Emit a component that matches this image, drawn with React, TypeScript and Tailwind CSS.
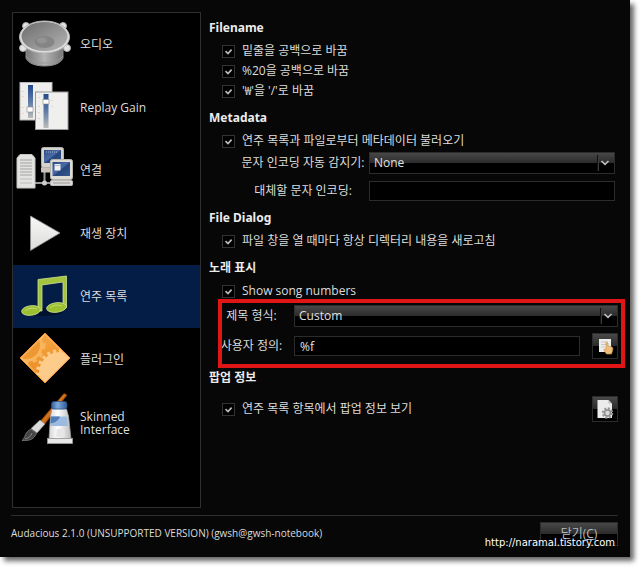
import { useState, type ComponentProps, type ReactNode } from 'react';
import { clsx } from 'clsx';

function AudioIcon() {
  return (
    <>
      <defs>
        <linearGradient id="spk-base" x1="0" x2="1">
          <stop offset="0" stopColor="#777" />
          <stop offset="0.5" stopColor="#b4b4b4" />
          <stop offset="1" stopColor="#777" />
        </linearGradient>
        <linearGradient id="spk-cone" x1="0" x2="1" y1="0" y2="1">
          <stop offset="0" stopColor="#6c6c6c" />
          <stop offset="1" stopColor="#b5b5b5" />
        </linearGradient>
      </defs>
      <path
        d="M13 34v11c2 5 9 8 18.500 8S48 50 50 45V34Z"
        fill="url(#spk-base)"
        stroke="#8d8d8d"
      />
      <path d="M13 43c4 5 10 7 18.500 7S46 48 50 43" fill="none" stroke="#999" />
      <g fill="#e3e3e3" stroke="#aaa">
        <circle cx="13" cy="13" r="3.500" />
        <circle cx="50" cy="13" r="3.500" />
        <circle cx="10" cy="35" r="3.500" />
        <circle cx="54" cy="35" r="3.500" />
      </g>
      <ellipse cx="31.500" cy="24" rx="25" ry="16" fill="#dedede" stroke="#b5b5b5" />
      <ellipse cx="31.500" cy="23.500" rx="23" ry="14.500" fill="url(#spk-cone)" />
      <ellipse cx="31.500" cy="29" rx="10" ry="6" fill="#858585" />
      <ellipse cx="29" cy="27.500" rx="5" ry="3" fill="#949494" />
    </>
  );
}

function GainIcon() {
  return (
    <>
      <defs>
        <linearGradient id="gain" x1="0" x2="0" y1="0" y2="1">
          <stop offset="0" stopColor="#24498a" />
          <stop offset="0.5" stopColor="#5c7ba8" />
          <stop offset="1" stopColor="#bdbdb8" />
        </linearGradient>
      </defs>
      <rect x="7" y="6.500" width="32" height="37.500" fill="#eeeeec" stroke="#b9b9b9" />
      <rect x="15" y="9" width="5" height="33" fill="url(#gain)" />
      <rect x="14" y="31" width="6" height="5" fill="#fff" stroke="#888" strokeWidth="0.600" />
      <path d="M10 15v1M10 20v1M10 31v1M24 15v1M10 37v1" stroke="#e8b9a8" />
      <rect x="22.500" y="16" width="32.500" height="37.500" fill="#efefed" stroke="#999" />
      <rect x="30.500" y="18" width="5" height="34" fill="url(#gain)" />
      <rect x="30" y="23.500" width="6" height="4.500" fill="#fff" stroke="#888" strokeWidth="0.600" />
      <path d="M26 21v1M26 30v1M26 36v1M26 42v1M39 24v1M39 30v1" stroke="#e8b9a8" />
    </>
  );
}

function NetworkIcon() {
  return (
    <>
      <defs>
        <linearGradient id="screen" x1="0" x2="1" y1="0" y2="1">
          <stop offset="0" stopColor="#2b4a83" />
          <stop offset="0.450" stopColor="#4a6ca6" />
          <stop offset="0.550" stopColor="#26457d" />
          <stop offset="1" stopColor="#34568f" />
        </linearGradient>
      </defs>
      <path d="M22 44h15M31.500 33v11" stroke="#999" strokeWidth="2" />
      <circle cx="31.500" cy="44" r="2.500" fill="#ccc" />
      <path d="M4 19l3-3.500h12l3 3.500v30H4Z" fill="#e2e2e0" stroke="#c4c4c4" />
      <path d="M7 21h12M7 24h12M7 27h12M7 30h12M7 33h12M7 36h12" stroke="#a2a2a0" />
      <path d="M7 40h12M7 44h12" stroke="#bcbcba" />
      <rect x="28" y="28" width="18" height="5.500" rx="1" fill="#c9c5bd" />
      <rect x="28.500" y="8.500" width="22" height="20" rx="2" fill="#d6d3cc" stroke="#b5b3ad" />
      <rect x="31" y="11" width="17" height="13" fill="url(#screen)" />
      <path d="M33 13h12" stroke="#a3b5d4" strokeDasharray="1 1" />
      <rect x="37.500" y="41.500" width="22" height="5" rx="1" fill="#dcdad5" stroke="#bbb" />
      <path d="M40 44h17" stroke="#999" />
      <rect x="37.500" y="20.500" width="22" height="20" rx="2" fill="#dedbd5" stroke="#b5b3ad" />
      <rect x="39.500" y="23" width="17.500" height="14" fill="url(#screen)" />
      <rect x="41.500" y="25" width="6" height="6.500" fill="#f0f0f0" />
      <path d="M42 26.500h5" stroke="#aab8d0" />
    </>
  );
}

function PlayIcon() {
  return (
    <>
      <defs>
        <linearGradient id="play" x1="0" x2="0" y1="0" y2="1">
          <stop offset="0" stopColor="#f8f8f8" />
          <stop offset="1" stopColor="#dcdcda" />
        </linearGradient>
      </defs>
      <path d="M17.500 14v34.500L47 31Z" fill="url(#play)" stroke="#8f8f8f" strokeWidth="0.800" />
    </>
  );
}

function MusicIcon() {
  return (
    <>
      <ellipse cx="28" cy="47" rx="22" ry="4" fill="#02122e" />
      <path
        d="M25 14.500L53.500 11v31.500H50V17L29 20v26h-4Z"
        fill="#a3c43c"
        stroke="#cfe090"
        strokeWidth="0.800"
      />
      <ellipse cx="18" cy="45.500" rx="9.500" ry="4.800" fill="#9dbf32" stroke="#cfe090" strokeWidth="0.800" transform="rotate(-7 18 45.500)" />
      <ellipse cx="43.500" cy="42.500" rx="10" ry="4.800" fill="#9dbf32" stroke="#cfe090" strokeWidth="0.800" transform="rotate(-7 43.500 42.500)" />
      <path d="M12 46c3-3 8-3.500 12-2M37 43c3-3 8-3.500 12-2" fill="none" stroke="#c4de70" />
    </>
  );
}

function PluginIcon() {
  return (
    <>
      <defs>
        <clipPath id="diamond">
          <path d="M32 5.500L56.500 30L32 54.500L7.500 30Z" />
        </clipPath>
        <linearGradient id="plug" x1="0" x2="0" y1="0" y2="1">
          <stop offset="0" stopColor="#f6a542" />
          <stop offset="1" stopColor="#e88a20" />
        </linearGradient>
      </defs>
      <path d="M32 5L57 30L32 55L7 30Z" fill="url(#plug)" stroke="#f08c28" />
      <g clipPath="url(#diamond)">
        <circle cx="13" cy="17" r="17" fill="#f9b55c" />
        <circle cx="13" cy="17" r="17" fill="none" stroke="#f9b55c" strokeWidth="5" strokeDasharray="4 4" />
        <circle cx="13" cy="17" r="14" fill="#ee9833" />
        <circle cx="47" cy="45" r="21" fill="#fdcb8a" />
        <circle cx="47" cy="45" r="22" fill="none" stroke="#fdcb8a" strokeWidth="4" strokeDasharray="3 3" />
      </g>
      <path d="M32 6.500L55.500 30L32 53.500L8.500 30Z" fill="none" stroke="#ffc47a" strokeWidth="0.800" />
    </>
  );
}

function SkinIcon() {
  return (
    <>
      <defs>
        <linearGradient id="tube" x1="0" x2="1">
          <stop offset="0" stopColor="#d5d5d5" />
          <stop offset="0.400" stopColor="#fff" />
          <stop offset="1" stopColor="#bcbcbc" />
        </linearGradient>
        <linearGradient id="cap" x1="0" x2="1">
          <stop offset="0" stopColor="#31619f" />
          <stop offset="0.400" stopColor="#7ea9dc" />
          <stop offset="1" stopColor="#2e5a96" />
        </linearGradient>
      </defs>
      <path d="M51 2.500l3 1.500L31 34l-4-3.500Z" fill="#c8660f" stroke="#8d4408" strokeWidth="0.600" />
      <path d="M51.500 4L29.500 31" stroke="#d88838" />
      <path d="M27 29l5 4-8 9-6-4.500Z" fill="#dcdcdc" stroke="#888" strokeWidth="0.600" />
      <path d="M18 38l5.500 4.500C21 48 17 50 9 49.500c3-2 3-9 9-11.500Z" fill="#444" stroke="#888" strokeWidth="0.700" />
      <path d="M12 48c4-1 6-3 7-6" fill="none" stroke="#888" />
      <path d="M39 18h14.500l2 7 2.500 22.500H36L37.500 25Z" fill="url(#tube)" stroke="#9d9d9d" strokeWidth="0.700" />
      <path d="M38 25.500h16l1 9.500H37.500Z" fill="#9dbbe0" />
      <path d="M38 25.500h9c-1 3-4 6-9.500 7Z" fill="#507fba" />
      <rect x="38.500" y="10.500" width="15.500" height="7.500" rx="2.500" fill="url(#cap)" stroke="#2b5288" strokeWidth="0.700" />
      <path d="M43 46l1-8h7l1 8" fill="#e6e6e6" />
      <rect x="34.500" y="47.500" width="25" height="5" fill="#e8e8e8" stroke="#9b9b9b" strokeWidth="0.800" />
    </>
  );
}

const categories: { label: string; icon: ReactNode }[] = [
  { label: '오디오', icon: <AudioIcon /> },
  { label: 'Replay Gain', icon: <GainIcon /> },
  { label: '연결', icon: <NetworkIcon /> },
  { label: '재생 장치', icon: <PlayIcon /> },
  { label: '연주 목록', icon: <MusicIcon /> },
  { label: '플러그인', icon: <PluginIcon /> },
  { label: 'Skinned Interface', icon: <SkinIcon /> },
];

const glossy =
  'border border-[#2c2c2c] bg-[linear-gradient(#484848,#2b2b2b_50%,#000_50%,#000)]';

function Section({ title, children }: { title: string; children: ReactNode }) {
  return (
    <section className="flex flex-col gap-[3px]">
      <h2 className="h-5 font-['Noto_Sans','Noto_Sans_CJK_KR',sans-serif] text-xs leading-5 font-bold text-[#ececec]">
        {title}
      </h2>
      <div>{children}</div>
    </section>
  );
}

function Check({ label }: { label: string }) {
  return (
    <label className="ml-[13px] flex h-5 items-center gap-[7px]">
      <span className="relative flex size-[13px] shrink-0">
        <input
          type="checkbox"
          defaultChecked
          className="peer size-[13px] appearance-none border border-[#333] bg-black"
        />
        <svg
          viewBox="0 0 13 13"
          className="pointer-events-none absolute inset-0 hidden size-[13px] peer-checked:block"
        >
          <path d="M3.500 6.200l2.500 2.400 3.600-4" fill="none" stroke="#bdbdbd" strokeWidth="1.600" />
        </svg>
      </span>
      {label}
    </label>
  );
}

function Select({ options, ...props }: ComponentProps<'select'> & { options: string[] }) {
  return (
    <span className="relative flex min-w-0 flex-1">
      <select
        {...props}
        className={clsx('h-[22px] w-full appearance-none pl-1 text-xs leading-5 text-[#e0e0e0]', glossy)}
      >
        {options.map((option) => (
          <option key={option}>{option}</option>
        ))}
      </select>
      <svg
        viewBox="0 0 18 22"
        className="pointer-events-none absolute top-0 right-0 h-[22px] w-[18px]"
        fill="none"
      >
        <path d="M.5 3v16" stroke="#111" />
        <path d="M1.500 3v16" stroke="#3c3c3c" />
        <path d="M4.500 9L8 12.300 11.500 9" stroke="#c0c0c0" strokeWidth="1.600" />
      </svg>
    </span>
  );
}

function TextBox(props: ComponentProps<'input'>) {
  return (
    <input
      type="text"
      {...props}
      className="h-5 min-w-0 flex-1 border border-[#2c2c2c] bg-black px-[5px] text-xs leading-4 text-[#e0e0e0]"
    />
  );
}

function IconButton({ label, children }: { label: string; children: ReactNode }) {
  return (
    <button
      type="button"
      aria-label={label}
      className={clsx('flex size-[26px] shrink-0 items-center justify-center', glossy)}
    >
      <svg viewBox="0 0 18 20" className="h-5 w-[18px]">
        {children}
      </svg>
    </button>
  );
}

export default function App() {
  const [active, setActive] = useState('연주 목록');

  return (
    <div className="bg-white pr-[10px] pb-[11px] font-['Open_Sans','Noto_Sans_CJK_KR',sans-serif] text-xs text-[#dcdcdc]">
      <div className="relative bg-[#070707] px-3 pt-3 pb-[11px] shadow-[4px_4px_5px_rgba(0,0,0,0.6)]">
        <div className="flex">
          <nav className="w-[189px] shrink-0 border border-[#2e2e2e] bg-black pb-[53px]">
            {categories.map(({ label, icon }) => (
              <button
                key={label}
                type="button"
                onClick={() => setActive(label)}
                className={clsx(
                  'flex h-[63px] w-full items-center gap-[3px] text-left leading-[13px]',
                  active === label && 'bg-[#031d47]'
                )}
              >
                <svg viewBox="0 0 64 63" className="h-[63px] w-16 shrink-0">
                  {icon}
                </svg>
                <span className="max-w-20">{label}</span>
              </button>
            ))}
          </nav>

          <main className="flex min-w-0 flex-1 flex-col gap-[7px] pt-[6px] pl-2">
            <Section title="Filename">
              <Check label="밑줄을 공백으로 바꿈" />
              <Check label="%20을 공백으로 바꿈" />
              <Check label="'₩'을 '/'로 바꿈" />
            </Section>

            <Section title="Metadata">
              <Check label="연주 목록과 파일로부터 메타데이터 불러오기" />
              <div className="mt-px mr-[3px] ml-8 flex flex-col gap-[7px]">
                <div className="flex items-center gap-1">
                  <label htmlFor="detector" className="w-[124px] text-center whitespace-nowrap">
                    문자 인코딩 자동 감지기:
                  </label>
                  <Select id="detector" options={['None']} />
                </div>
                <div className="flex items-center gap-1">
                  <label htmlFor="fallback" className="w-[124px] text-center">
                    대체할 문자 인코딩:
                  </label>
                  <TextBox id="fallback" />
                </div>
              </div>
            </Section>

            <Section title="File Dialog">
              <Check label="파일 창을 열 때마다 항상 디렉터리 내용을 새로고침" />
            </Section>

            <Section title="노래 표시">
              <Check label="Show song numbers" />
              <div className="relative mt-1 ml-2 flex flex-col gap-[6px] pb-0.5">
                <div className="flex items-center gap-2">
                  <label htmlFor="format" className="w-[69px] text-center">
                    제목 형식:
                  </label>
                  <Select id="format" options={['Custom']} />
                </div>
                <div className="flex items-center gap-2">
                  <label htmlFor="custom" className="w-[69px] text-center">
                    사용자 정의:
                  </label>
                  <div className="flex min-w-0 flex-1 items-center gap-3">
                    <TextBox id="custom" defaultValue="%f" />
                    <IconButton label="Insert field">
                      <path d="M3 3h12v13H3Z" fill="#ededeb" />
                      <path d="M5 6h7M5 8.500h5M5 11h4" stroke="#c8c8c6" />
                      <path
                        d="M10 6.500c1.200-.7 2 .2 2 1.500v2l4 1c1 .5 1 2 .6 3.500L15.500 18h-5L8 14.500c-.5-1.500.5-2 2-1Z"
                        fill="#edbd7c"
                        stroke="#c98f45"
                        strokeWidth="0.600"
                      />
                    </IconButton>
                  </div>
                </div>
                {/* highlight frame around the title format fields */}
                <div className="pointer-events-none absolute -top-[6px] -right-[7px] -bottom-[7px] left-px border-4 border-[#e01515]" />
              </div>
            </Section>

            <Section title="팝업 정보">
              <div className="flex items-center justify-between pt-[5px]">
                <Check label="연주 목록 항목에서 팝업 정보 보기" />
                <IconButton label="Popup settings">
                  <path d="M1.500 1h11L16 4.500V19H1.500Z" fill="#ececec" />
                  <path d="M12.500 1v3.500H16Z" fill="#bbb" />
                  <circle cx="11.500" cy="14" r="4.500" fill="none" stroke="#999" strokeWidth="2.500" strokeDasharray="2 1.500" />
                  <circle cx="11.500" cy="14" r="3" fill="#d8d8d8" stroke="#8c8c8c" strokeWidth="1.500" />
                </IconButton>
              </div>
            </Section>
          </main>
        </div>

        <footer className="mt-[7px] -ml-px flex items-start justify-between border-t border-[#2e2e2e] pt-[6px]">
          <p className="text-[10px] leading-[22px]">
            Audacious 2.1.0 (UNSUPPORTED VERSION) (gwsh@gwsh-notebook)
          </p>
          <button type="button" className={clsx('h-6 w-[78px] leading-5 text-[#bbb]', glossy)}>
            닫기(<u>C</u>)
          </button>
        </footer>

        <a
          href="http://naramal.tistory.com"
          className="absolute right-[15px] bottom-[6px] font-['DejaVu_Sans',sans-serif] text-[10px] leading-4 text-white"
        >
          http://naramal.tistory.com
        </a>
      </div>
    </div>
  );
}
